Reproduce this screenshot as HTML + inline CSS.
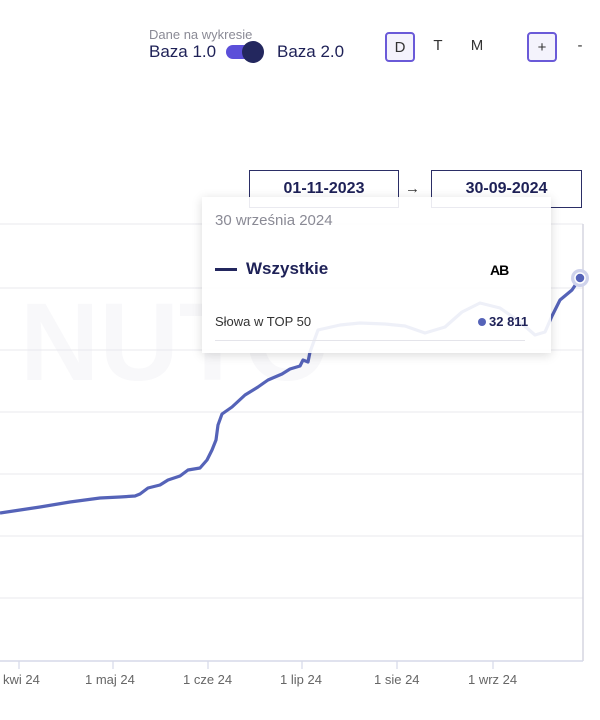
<!DOCTYPE html>
<html><head><meta charset="utf-8"><style>
body{margin:0;width:600px;height:720px;background:#fff;font-family:"Liberation Sans",sans-serif;position:relative;overflow:hidden;color:#1e2157}
.a{position:absolute}
.btn{position:absolute;width:30px;height:30px;box-sizing:border-box;text-align:center;line-height:28px;font-size:15px;color:#333}
.sel{border:2px solid #6a5ad8;border-radius:4px;background:#f4f3fc}
.date{position:absolute;top:170px;height:38px;border:1.5px solid #2b2e66;box-sizing:border-box;font-weight:bold;font-size:16px;text-align:center;line-height:36px;color:#1e2157}
</style></head><body>
<div class="a" style="left:149px;top:27px;font-size:13px;color:#8a8a95">Dane na wykresie</div>
<div class="a" style="left:149px;top:42px;font-size:17px">Baza 1.0</div>
<div class="a" style="left:226px;top:45px;width:34px;height:14px;border-radius:7px;background:#5b4fd9"></div>
<div class="a" style="left:242px;top:41px;width:22px;height:22px;border-radius:11px;background:#23275e"></div>
<div class="a" style="left:277px;top:42px;font-size:17px">Baza 2.0</div>
<div class="btn sel" style="left:385px;top:32px">D</div>
<div class="btn" style="left:423px;top:32px">T</div>
<div class="btn" style="left:462px;top:32px">M</div>
<div class="btn sel" style="left:527px;top:32px">+</div>
<div class="btn" style="left:565px;top:32px">-</div>
<div class="date" style="left:249px;width:150px">01-11-2023</div>
<div class="a" style="left:405px;top:180px;font-size:15px;color:#333">→</div>
<div class="date" style="left:431px;width:151px">30-09-2024</div>
<svg class="a" style="left:0;top:0" width="600" height="720">
<text x="20" y="380" font-size="110" font-family="Liberation Sans" font-weight="bold" fill="#f8f8fa">NUTO</text>
<g stroke="#e9e9ee" stroke-width="1">
<line x1="0" y1="224" x2="583" y2="224"/><line x1="0" y1="288" x2="583" y2="288"/><line x1="0" y1="350" x2="583" y2="350"/><line x1="0" y1="412" x2="583" y2="412"/><line x1="0" y1="474" x2="583" y2="474"/><line x1="0" y1="536" x2="583" y2="536"/><line x1="0" y1="598" x2="583" y2="598"/>
</g>
<line x1="583" y1="224" x2="583" y2="661" stroke="#d6d6e0" stroke-width="1.5"/>
<line x1="0" y1="661" x2="583" y2="661" stroke="#d6d9e8" stroke-width="1.5"/>
<g stroke="#d6d9e8" stroke-width="1.2"><line x1="19" y1="661" x2="19" y2="669"/><line x1="113" y1="661" x2="113" y2="669"/><line x1="208" y1="661" x2="208" y2="669"/><line x1="302" y1="661" x2="302" y2="669"/><line x1="397" y1="661" x2="397" y2="669"/><line x1="493" y1="661" x2="493" y2="669"/></g>
<g font-size="13" fill="#666" font-family="Liberation Sans"><text x="3" y="684">kwi 24</text><text x="85" y="684">1 maj 24</text><text x="183" y="684">1 cze 24</text><text x="280" y="684">1 lip 24</text><text x="374" y="684">1 sie 24</text><text x="468" y="684">1 wrz 24</text></g>
<polyline fill="none" stroke="#5563b8" stroke-width="3.2" stroke-linejoin="round" points="0,513 20,510 40,507 70,502 100,498 120,497 135,496 140,494 148,488 160,485 168,480 180,476 188,470 200,468 207,460 212,450 216,440 218,425 222,414 232,407 245,395 258,387 268,380 282,374 290,369 300,366 303,360 308,362 310,352 318,330 340,325 360,323 385,324 405,326 425,333 445,327 462,312 480,303 500,308 520,322 535,335 545,332 552,316 560,300 572,290 580,278"/>
<circle cx="580" cy="278" r="9" fill="#cfd3ec"/><circle cx="580" cy="278" r="5" fill="#5563b8" stroke="#fff" stroke-width="1.5"/>
</svg>
<div class="a" style="left:202px;top:197px;width:349px;height:156px;background:rgba(255,255,255,0.9);box-shadow:0 2px 10px rgba(0,0,0,0.15)">
<div class="a" style="left:13px;top:15px;font-size:15px;color:#8a8a95">30 września 2024</div>
<div class="a" style="left:13px;top:71px;width:22px;height:3px;background:#23275e"></div>
<div class="a" style="left:44px;top:62px;font-size:17px;font-weight:bold;color:#1e2157">Wszystkie</div>
<div class="a" style="left:288px;top:65px;font-size:14px;font-weight:900;color:#000;letter-spacing:-1px">AB</div>
<div class="a" style="left:13px;top:117px;font-size:13px;color:#333">Słowa w TOP 50</div>
<div class="a" style="left:276px;top:121px;width:8px;height:8px;border-radius:4px;background:#5563b8"></div>
<div class="a" style="left:287px;top:117px;font-size:13px;font-weight:bold;color:#1e2157">32 811</div>
<div class="a" style="left:13px;top:143px;width:310px;height:1px;background:#e4e4ea"></div>
</div>
</body></html>
